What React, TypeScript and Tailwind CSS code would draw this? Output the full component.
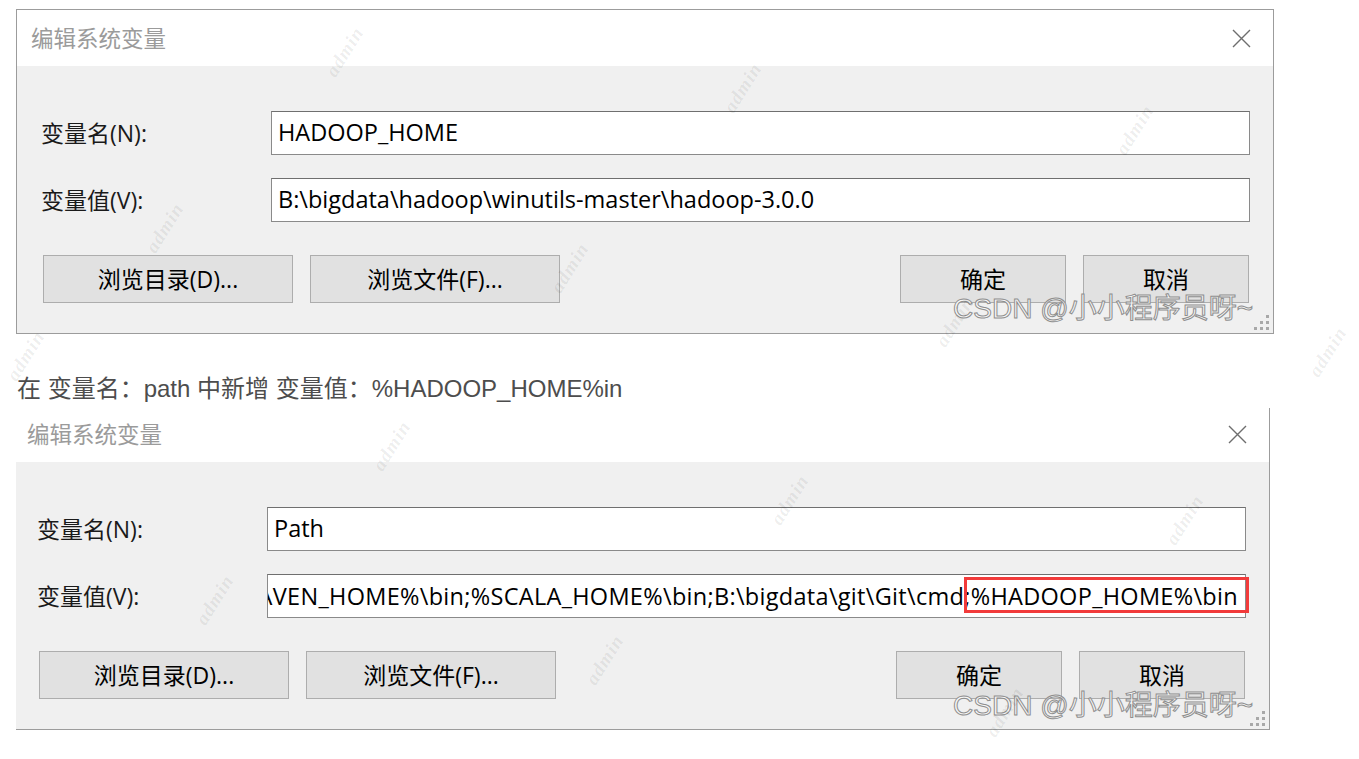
import React from "react"

const uiFont = "font-['Open_Sans','Noto_Sans_CJK_SC',sans-serif]"

const marks = [
    { x: 345, y: 52 },
    { x: 743, y: 88 },
    { x: 1135, y: 130 },
    { x: 165, y: 228 },
    { x: 570, y: 268 },
    { x: 955, y: 322 },
    { x: 1328, y: 352 },
    { x: 26, y: 356 },
    { x: 392, y: 446 },
    { x: 790, y: 500 },
    { x: 1185, y: 520 },
    { x: 215, y: 600 },
    { x: 605, y: 660 },
    { x: 1005, y: 712 },
]

const CloseIcon = () => (
    <svg width="19" height="19" viewBox="0 0 19 19" fill="none">
        <path d="M1 1L18 18M18 1L1 18" stroke="#6e6e6e" strokeWidth="1.4" />
    </svg>
)

const Grip = () => (
    <svg width="15" height="15" viewBox="0 0 15 15" className="absolute right-[4px] bottom-[3px]">
        <rect x="12" y="0" width="3" height="3" fill="#a8a8a8" />
        <rect x="6" y="6" width="3" height="3" fill="#a8a8a8" />
        <rect x="12" y="6" width="3" height="3" fill="#a8a8a8" />
        <rect x="0" y="12" width="3" height="3" fill="#a8a8a8" />
        <rect x="6" y="12" width="3" height="3" fill="#a8a8a8" />
        <rect x="12" y="12" width="3" height="3" fill="#a8a8a8" />
    </svg>
)

const Button = ({ label, wide }: { label: string; wide?: boolean }) => (
    <div
        className={`${wide ? "w-[250px]" : "w-[166px]"} h-[48px] flex items-center justify-center border border-[#adadad] bg-[#e1e1e1] text-[23px] text-black ${uiFont}`}
    >
        {label}
    </div>
)

const Field = ({ label, children }: { label: string; children: React.ReactNode }) => (
    <div className="flex items-center">
        <div className={`w-[230px] text-[23px] text-[#1a1a1a] ${uiFont}`}>{label}</div>
        <div className="relative w-[979px] h-[44px] border border-[#8a8a8a] border-t-[#6f6f6f] bg-white">
            {children}
        </div>
    </div>
)

const Dialog = ({ name, value }: { name: string; value: React.ReactNode }) => (
    <div className="relative w-[1258px] h-[325px] shrink-0 border border-[#9c9c9c] bg-[#f0f0f0] flex flex-col">
        <div className="h-[56px] shrink-0 bg-white flex items-center justify-between pl-[14px] pr-[22px]">
            <span className="text-[22.5px] text-[#9b9b9b] font-['Noto_Sans_CJK_SC',sans-serif]">编辑系统变量</span>
            <CloseIcon />
        </div>
        <div className="flex flex-col pt-[45px] pl-[24px] pr-[22px]">
            <Field label="变量名(N):">
                <div className={`h-full flex items-center pl-[6px] text-[23.5px] text-black ${uiFont}`}>{name}</div>
            </Field>
            <div className="h-[23px]" />
            <Field label="变量值(V):">{value}</Field>
            <div className="mt-[33px] flex justify-between pl-[2px] pr-[2px]">
                <div className="flex gap-[17px]">
                    <Button label="浏览目录(D)..." wide />
                    <Button label="浏览文件(F)..." wide />
                </div>
                <div className="flex gap-[17px]">
                    <Button label="确定" />
                    <Button label="取消" />
                </div>
            </div>
        </div>
        <Grip />
    </div>
)

const Csdn = ({ right }: { right: string }) => (
    <div
        className={`absolute ${right} bottom-[9px] text-[28px] leading-[32px] whitespace-nowrap text-[#f7f7f7] [-webkit-text-stroke:1px_#8e8e8e] font-['Liberation_Sans','Noto_Sans_CJK_SC',sans-serif]`}
    >
        CSDN @小小程序员呀~
    </div>
)

export default function App() {
    return (
        <div className="relative w-[1359px] h-[759px] overflow-hidden bg-white flex flex-col">
            <div className="relative ml-[16px] mt-[9px] w-[1258px]">
                <Dialog
                    name="HADOOP_HOME"
                    value={
                        <div className={`h-full flex items-center pl-[6px] text-[23.5px] text-black ${uiFont}`}>
                            B:\bigdata\hadoop\winutils-master\hadoop-3.0.0
                        </div>
                    }
                />
                <Csdn right="right-[21px]" />
            </div>

            <p className="mt-[39px] ml-[17px] h-[32px] leading-[32px] text-[24px] text-[#4d4d4d] font-['Liberation_Sans','Noto_Sans_CJK_SC',sans-serif]">
                在 变量名：path 中新增 变量值：%HADOOP_HOME%in
            </p>

            <div className="relative mt-[3px] ml-[16px] w-[1254px] h-[323px] overflow-hidden">
                <div className="-ml-[4px] -mt-[3px]">
                    <Dialog
                        name="Path"
                        value={
                            <div className="h-full flex items-center justify-end pr-[7px] [clip-path:inset(0_-12px_0_0)]">
                                <div className={`whitespace-nowrap text-[23.5px] leading-[32px] tracking-[0.3px] text-black ${uiFont}`}>
                                    %MAVEN_HOME%\bin;%SCALA_HOME%\bin;B:\bigdata\git\Git\cmd;
                                    <span className="relative">
                                        %HADOOP_HOME%\bin
                                        <span className="absolute -left-[7px] -right-[11px] -top-[3px] -bottom-[1px] border-[3px] border-[#f23b3b]" />
                                    </span>
                                </div>
                            </div>
                        }
                    />
                </div>
                <Csdn right="right-[17px]" />
            </div>

            <div className="pointer-events-none absolute inset-0">
                {marks.map((m, i) => (
                    <span
                        key={i}
                        className="absolute -translate-x-1/2 -translate-y-1/2 -rotate-[58deg] text-[19px] italic font-bold tracking-[1px] text-black/[0.08] font-['Liberation_Serif',serif]"
                        style={{ left: m.x, top: m.y }}
                    >
                        admin
                    </span>
                ))}
            </div>
        </div>
    )
}
